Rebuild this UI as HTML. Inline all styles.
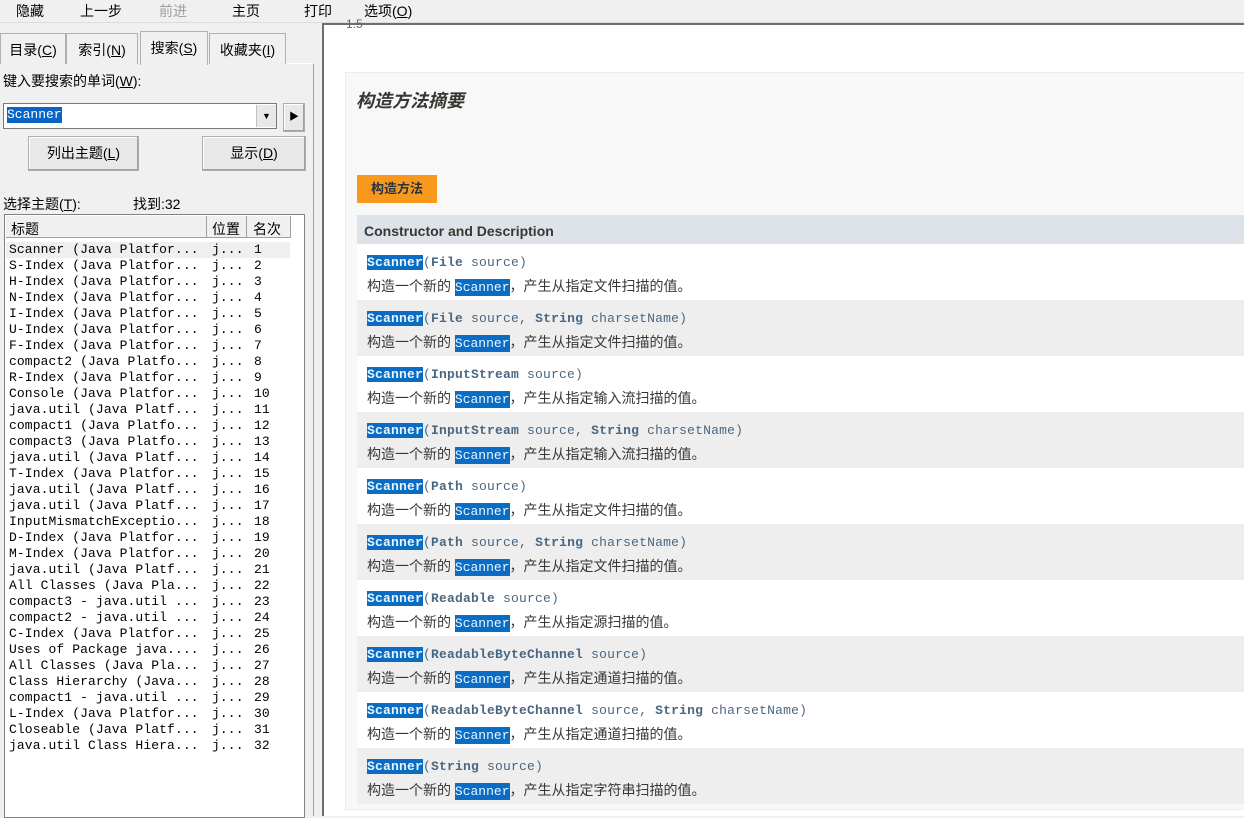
<!DOCTYPE html>
<html><head><meta charset="utf-8">
<style>
*{margin:0;padding:0;box-sizing:border-box}
body{width:1244px;height:816px;overflow:hidden;background:#f0f0f0;font-family:"Liberation Sans","Noto Sans CJK SC",sans-serif;font-size:14px;color:#000;position:relative}
.abs{position:absolute}
.tb span{position:absolute;top:1px;font-size:14px}
u{text-decoration:underline}
.tab{position:absolute;top:33px;height:31px;border:1px solid #b0b0b0;border-bottom:none;background:#f0f0f0;padding-top:6px;text-align:center;font-size:14px}
.btn{position:absolute;border:1px solid #adadad;background:#e8e8e8;text-align:center;font-size:14px;box-shadow:inset -1px -1px 0 #a0a0a0, inset 1px 1px 0 #fff}
.list{position:absolute;left:4px;top:214px;width:301px;height:604px;background:#fff;border:1px solid #828282}
.hd{position:absolute;top:1px;height:22px;border-right:1px solid #a0a0a0;border-bottom:1px solid #a0a0a0;background:#f0f0f0;padding:3px 0 0 5px;font-size:14px}
.rows{position:absolute;top:27px;font-family:"Liberation Mono","Noto Sans CJK SC",monospace;font-size:13px;line-height:16px;white-space:pre;letter-spacing:0.1px}
.rp{position:absolute;left:322px;top:23px;width:922px;height:793px;background:#fff;border-left:2px solid #6e6e6e;border-top:2px solid #6e6e6e}
.box{position:absolute;left:21px;top:47px;width:910px;height:738px;background:#f8f8f8;border:1px solid #ececec}
.row{position:absolute;left:11px;width:900px;height:56px;padding:10px 0 0 10px}
.row.g{background:#eeeeee}.row.w{background:#fff}
.code{font-family:"Liberation Mono",monospace;font-size:13px;color:#4a6782;letter-spacing:0.2px;height:22px;line-height:18px}
.code b{font-weight:bold}
.hl{background:#0b6cc4;color:#eaf6ff;font-weight:bold}
.desc{font-family:"Liberation Sans","Noto Sans CJK SC",sans-serif;font-size:14px;color:#353833;line-height:20px}
.desc .hl{font-family:"Liberation Mono",monospace;font-size:13px;font-weight:normal;padding:1px 0}
</style></head><body>
<div class="tb">
<span style="left:16px">隐藏</span><span style="left:80px">上一步</span><span style="left:159px;color:#a0a0a0">前进</span><span style="left:232px">主页</span><span style="left:304px">打印</span><span style="left:364px">选项(<u>O</u>)</span>
</div>
<div class="abs" style="left:0;top:22px;width:1244px;height:1px;background:#dcdcdc"></div>
<div class="abs" style="left:0;top:63px;width:314px;height:753px;border-right:1px solid #a0a0a0;border-top:1px solid #fff"></div>
<div class="tab" style="left:0;width:66px;">目录(<u>C</u>)</div>
<div class="tab" style="left:66px;width:72px;">索引(<u>N</u>)</div>
<div class="tab" style="left:140px;top:31px;height:34px;width:68px;padding-top:6px;border-bottom:none;z-index:2">搜索(<u>S</u>)</div>
<div class="tab" style="left:209px;width:77px;">收藏夹(<u>I</u>)</div>
<div class="abs" style="left:3px;top:71px;font-size:14px">键入要搜索的单词(<u>W</u>):</div>
<div class="abs" style="left:3px;top:103px;width:274px;height:26px;background:#fff;border:1px solid #7a7a7a"></div>
<div class="abs" style="left:7px;top:107px;background:#0a64c8;color:#fff;font-family:'Liberation Mono',monospace;font-size:13px;line-height:16px">Scanner</div>
<div class="abs" style="left:256px;top:105px;width:20px;height:22px;background:#e8e8e8;border-left:1px solid #c0c0c0;font-size:9px;text-align:center;line-height:22px">▼</div>
<div class="btn" style="left:283px;top:103px;width:22px;height:29px;font-size:10px;line-height:27px">▶</div>
<div class="btn" style="left:28px;top:136px;width:111px;height:35px;line-height:33px">列出主题(<u>L</u>)</div>
<div class="btn" style="left:202px;top:136px;width:104px;height:35px;line-height:33px">显示(<u>D</u>)</div>
<div class="abs" style="left:3px;top:194px">选择主题(<u>T</u>):</div>
<div class="abs" style="left:133px;top:194px">找到:32</div>
<div class="list">
<div class="hd" style="left:1px;width:201px">标题</div>
<div class="hd" style="left:202px;width:40px;padding-left:5px">位置</div>
<div class="hd" style="left:242px;width:44px;padding-left:6px">名次</div>
<div class="abs" style="left:1px;top:27px;width:284px;height:16px;background:#efefef"></div>
<div class="rows" style="left:4px">Scanner (Java Platfor...
S-Index (Java Platfor...
H-Index (Java Platfor...
N-Index (Java Platfor...
I-Index (Java Platfor...
U-Index (Java Platfor...
F-Index (Java Platfor...
compact2 (Java Platfo...
R-Index (Java Platfor...
Console (Java Platfor...
java.util (Java Platf...
compact1 (Java Platfo...
compact3 (Java Platfo...
java.util (Java Platf...
T-Index (Java Platfor...
java.util (Java Platf...
java.util (Java Platf...
InputMismatchExceptio...
D-Index (Java Platfor...
M-Index (Java Platfor...
java.util (Java Platf...
All Classes (Java Pla...
compact3 - java.util ...
compact2 - java.util ...
C-Index (Java Platfor...
Uses of Package java....
All Classes (Java Pla...
Class Hierarchy (Java...
compact1 - java.util ...
L-Index (Java Platfor...
Closeable (Java Platf...
java.util Class Hiera...</div>
<div class="rows" style="left:207px">j...
j...
j...
j...
j...
j...
j...
j...
j...
j...
j...
j...
j...
j...
j...
j...
j...
j...
j...
j...
j...
j...
j...
j...
j...
j...
j...
j...
j...
j...
j...
j...</div>
<div class="rows" style="left:249px">1
2
3
4
5
6
7
8
9
10
11
12
13
14
15
16
17
18
19
20
21
22
23
24
25
26
27
28
29
30
31
32</div>
</div>
<div class="rp">
<div class="abs" style="left:22px;top:-8px;font-size:12px;color:#666">1.5</div>
<div class="box">
<div class="abs" style="left:10px;top:14px;font-size:18px;font-style:italic;color:#353833;font-weight:bold">构造方法摘要</div>
<div class="abs" style="left:11px;top:102px;width:80px;height:28px;background:#f8981d;font-weight:bold;font-size:13px;color:#253441;text-align:center;line-height:28px">构造方法</div>
<div class="abs" style="left:11px;top:142px;width:900px;height:29px;background:#dee3e9;font-weight:bold;font-size:14px;color:#353833;padding:8px 0 0 7px">Constructor and Description</div>
<div class="row w" style="top:171px"><div class="code"><span class="hl">Scanner</span>(<b>File</b> source)</div><div class="desc">构造一个新的 <span class="hl">Scanner</span>，产生从指定文件扫描的值。</div></div>
<div class="row g" style="top:227px"><div class="code"><span class="hl">Scanner</span>(<b>File</b> source, <b>String</b> charsetName)</div><div class="desc">构造一个新的 <span class="hl">Scanner</span>，产生从指定文件扫描的值。</div></div>
<div class="row w" style="top:283px"><div class="code"><span class="hl">Scanner</span>(<b>InputStream</b> source)</div><div class="desc">构造一个新的 <span class="hl">Scanner</span>，产生从指定输入流扫描的值。</div></div>
<div class="row g" style="top:339px"><div class="code"><span class="hl">Scanner</span>(<b>InputStream</b> source, <b>String</b> charsetName)</div><div class="desc">构造一个新的 <span class="hl">Scanner</span>，产生从指定输入流扫描的值。</div></div>
<div class="row w" style="top:395px"><div class="code"><span class="hl">Scanner</span>(<b>Path</b> source)</div><div class="desc">构造一个新的 <span class="hl">Scanner</span>，产生从指定文件扫描的值。</div></div>
<div class="row g" style="top:451px"><div class="code"><span class="hl">Scanner</span>(<b>Path</b> source, <b>String</b> charsetName)</div><div class="desc">构造一个新的 <span class="hl">Scanner</span>，产生从指定文件扫描的值。</div></div>
<div class="row w" style="top:507px"><div class="code"><span class="hl">Scanner</span>(<b>Readable</b> source)</div><div class="desc">构造一个新的 <span class="hl">Scanner</span>，产生从指定源扫描的值。</div></div>
<div class="row g" style="top:563px"><div class="code"><span class="hl">Scanner</span>(<b>ReadableByteChannel</b> source)</div><div class="desc">构造一个新的 <span class="hl">Scanner</span>，产生从指定通道扫描的值。</div></div>
<div class="row w" style="top:619px"><div class="code"><span class="hl">Scanner</span>(<b>ReadableByteChannel</b> source, <b>String</b> charsetName)</div><div class="desc">构造一个新的 <span class="hl">Scanner</span>，产生从指定通道扫描的值。</div></div>
<div class="row g" style="top:675px"><div class="code"><span class="hl">Scanner</span>(<b>String</b> source)</div><div class="desc">构造一个新的 <span class="hl">Scanner</span>，产生从指定字符串扫描的值。</div></div>
</div>
</div>
</body></html>
